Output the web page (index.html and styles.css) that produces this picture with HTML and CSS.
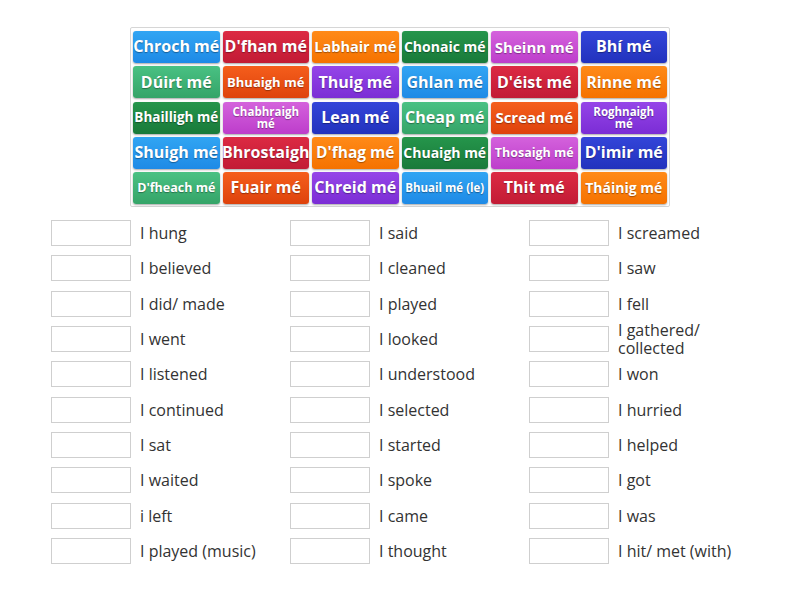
FILE: index.html
```html
<!DOCTYPE html>
<html>
<head>
<meta charset="utf-8">
<link rel="stylesheet" href="styles.css">
</head>
<body>
<div class="page">
  <div class="tiles">
    <div class="tile c-blue">Chroch mé</div>
    <div class="tile c-red">D'fhan mé</div>
    <div class="tile c-orange f145">Labhair mé</div>
    <div class="tile c-dgreen f14">Chonaic mé</div>
    <div class="tile c-magenta f15">Sheinn mé</div>
    <div class="tile c-dblue">Bhí mé</div>

    <div class="tile c-green">Dúirt mé</div>
    <div class="tile c-rorange f13">Bhuaigh mé</div>
    <div class="tile c-purple">Thuig mé</div>
    <div class="tile c-blue">Ghlan mé</div>
    <div class="tile c-red">D'éist mé</div>
    <div class="tile c-orange">Rinne mé</div>

    <div class="tile c-dgreen f135">Bhailligh mé</div>
    <div class="tile c-magenta f11 two">Chabhraigh mé</div>
    <div class="tile c-dblue">Lean mé</div>
    <div class="tile c-green">Cheap mé</div>
    <div class="tile c-rorange f15">Scread mé</div>
    <div class="tile c-purple f11 two">Roghnaigh mé</div>

    <div class="tile c-blue">Shuigh mé</div>
    <div class="tile c-red">Bhrostaigh</div>
    <div class="tile c-orange f155">D'fhag mé</div>
    <div class="tile c-dgreen f14">Chuaigh mé</div>
    <div class="tile c-magenta f125">Thosaigh mé</div>
    <div class="tile c-dblue">D'imir mé</div>

    <div class="tile c-green f125">D'fheach mé</div>
    <div class="tile c-rorange">Fuair mé</div>
    <div class="tile c-purple">Chreid mé</div>
    <div class="tile c-blue f11">Bhuail mé (le)</div>
    <div class="tile c-red">Thit mé</div>
    <div class="tile c-orange f14">Tháinig mé</div>
  </div>

  <div class="answers">
    <div class="col">
      <div class="row"><div class="box"></div><div class="label">I hung</div></div>
      <div class="row"><div class="box"></div><div class="label">I believed</div></div>
      <div class="row"><div class="box"></div><div class="label">I did/ made</div></div>
      <div class="row"><div class="box"></div><div class="label">I went</div></div>
      <div class="row"><div class="box"></div><div class="label">I listened</div></div>
      <div class="row"><div class="box"></div><div class="label">I continued</div></div>
      <div class="row"><div class="box"></div><div class="label">I sat</div></div>
      <div class="row"><div class="box"></div><div class="label">I waited</div></div>
      <div class="row"><div class="box"></div><div class="label">i left</div></div>
      <div class="row"><div class="box"></div><div class="label">I played (music)</div></div>
    </div>
    <div class="col">
      <div class="row"><div class="box"></div><div class="label">I said</div></div>
      <div class="row"><div class="box"></div><div class="label">I cleaned</div></div>
      <div class="row"><div class="box"></div><div class="label">I played</div></div>
      <div class="row"><div class="box"></div><div class="label">I looked</div></div>
      <div class="row"><div class="box"></div><div class="label">I understood</div></div>
      <div class="row"><div class="box"></div><div class="label">I selected</div></div>
      <div class="row"><div class="box"></div><div class="label">I started</div></div>
      <div class="row"><div class="box"></div><div class="label">I spoke</div></div>
      <div class="row"><div class="box"></div><div class="label">I came</div></div>
      <div class="row"><div class="box"></div><div class="label">I thought</div></div>
    </div>
    <div class="col">
      <div class="row"><div class="box"></div><div class="label">I screamed</div></div>
      <div class="row"><div class="box"></div><div class="label">I saw</div></div>
      <div class="row"><div class="box"></div><div class="label">I fell</div></div>
      <div class="row"><div class="box"></div><div class="label">I gathered/ collected</div></div>
      <div class="row"><div class="box"></div><div class="label">I won</div></div>
      <div class="row"><div class="box"></div><div class="label">I hurried</div></div>
      <div class="row"><div class="box"></div><div class="label">I helped</div></div>
      <div class="row"><div class="box"></div><div class="label">I got</div></div>
      <div class="row"><div class="box"></div><div class="label">I was</div></div>
      <div class="row"><div class="box"></div><div class="label">I hit/ met (with)</div></div>
    </div>
  </div>
</div>
</body>
</html>
```

FILE: styles.css
```css
html, body {
  margin: 0;
  padding: 0;
  background: #ffffff;
}
.page {
  width: 800px;
  height: 600px;
  padding-top: 27px;
  box-sizing: border-box;
  font-family: "Open Sans", "Liberation Sans", sans-serif;
}
.tiles {
  width: 540px;
  margin: 0 auto;
  box-sizing: border-box;
  border: 1px solid #d6d6d6;
  border-radius: 2px;
  padding: 3px 2px 2px 2px;
  display: grid;
  grid-template-columns: repeat(6, 1fr);
  grid-auto-rows: 32px;
  column-gap: 3px;
  row-gap: 3.3px;
}
.tile {
  color: #ffffff;
  font-weight: 700;
  font-size: 16px;
  line-height: 1.1;
  text-align: center;
  display: flex;
  align-items: center;
  justify-content: center;
  border-radius: 3px;
  white-space: nowrap;
  overflow: hidden;
  text-shadow: 0 1px 1px rgba(0,0,0,0.35);
  box-shadow: 0 1px 2px rgba(0,0,0,0.35);
}
.tile.two {
  white-space: normal;
  padding: 0 8px;
  line-height: 1.05;
}
.f155 { font-size: 15.5px; }
.f15 { font-size: 15px; }
.f145 { font-size: 14.5px; }
.f14 { font-size: 14px; }
.f135 { font-size: 13.5px; }
.f13 { font-size: 13px; }
.f125 { font-size: 12.5px; }
.f11 { font-size: 11.5px; }

.c-blue { background: linear-gradient(#31a5f3, #1e8ae6); }
.c-red { background: linear-gradient(#dc2a43, #c21b35); }
.c-orange { background: linear-gradient(#ff8a18, #f57200); }
.c-dgreen { background: linear-gradient(#25954b, #197a3a); }
.c-magenta { background: linear-gradient(#d462dc, #bd3dcb); }
.c-dblue { background: linear-gradient(#3345d9, #2232bd); }
.c-green { background: linear-gradient(#49c183, #35a468); }
.c-rorange { background: linear-gradient(#f55e1c, #de420c); }
.c-purple { background: linear-gradient(#9545e8, #7b2dd5); }

.answers {
  display: flex;
  padding-left: 51px;
  margin-top: 13px;
}
.col {
  width: 239px;
  display: flex;
  flex-direction: column;
  row-gap: 9.3px;
}
.row {
  display: flex;
  align-items: center;
  height: 26px;
}
.box {
  width: 80px;
  height: 26px;
  box-sizing: border-box;
  border: 1px solid #cfcfcf;
  background: #ffffff;
  flex: none;
}
.label {
  margin-left: 9px;
  width: 130px;
  font-size: 16px;
  line-height: 18px;
  color: #333333;
}
```
